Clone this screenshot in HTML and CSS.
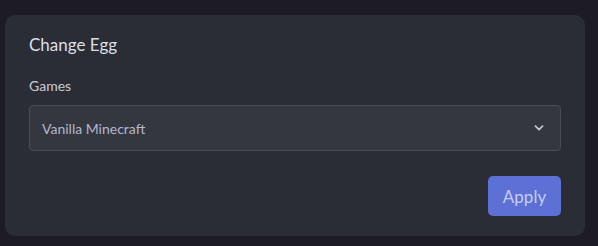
FILE: index.html
```html
<!DOCTYPE html>
<html lang="en">
<head>
    <meta charset="UTF-8">
    <meta name="viewport" content="width=device-width, initial-scale=1.0">
    <title>Change Egg</title>
    <link rel="stylesheet" href="styles.css">
</head>
<body>

    <!-- Change egg card -->
    <div class="card">
        <h2 class="card-title">Change Egg</h2>

        <div class="form-group">
            <label class="form-label">Games</label>
            <div class="select">
                <span class="select-value">Vanilla Minecraft</span>
                <svg class="select-arrow" width="10" height="6" viewBox="0 0 10 6">
                    <path d="M1.5 1.2 L5 4.6 L8.5 1.2" fill="none" stroke="#c3c6d2" stroke-width="1.8" stroke-linecap="round" stroke-linejoin="round"/>
                </svg>
            </div>
        </div>

        <div class="actions">
            <button class="apply-btn">Apply</button>
        </div>
    </div>

</body>
</html>
```

FILE: styles.css
```css
/* General styles */
body {
    margin: 0;
    padding: 15px 13px 11px 5px;
    background-color: #1c1b26;
    font-family: Lato, "Noto Sans", sans-serif;
    color: #d7d9e0;
}
.card {
    background-color: #2b2d36;
    border-radius: 10px;
    padding: 18px 24px 20px;
}
.card-title {
    margin: 0;
    font-size: 17px;
    font-weight: normal;
    line-height: 24px;
    color: #dcdee6;
}
.form-group {
    margin-top: 19px;
}
.form-label {
    display: block;
    font-size: 14px;
    line-height: 20px;
    color: #c9cbd3;
    margin-bottom: 9px;
}
.select {
    display: flex;
    align-items: center;
    justify-content: space-between;
    height: 44px;
    padding: 0 16px 0 12px;
    background-color: #343640;
    border: 1px solid #484a54;
    border-radius: 4px;
}
.select-value {
    font-size: 14px;
    color: #b3b7cf;
}
.select-arrow {
    display: block;
}
.actions {
    display: flex;
    justify-content: flex-end;
    margin-top: 25px;
}
.apply-btn {
    width: 73px;
    height: 40px;
    border: none;
    border-radius: 5px;
    background-color: #5c70d5;
    color: #c6cdf5;
    font-family: inherit;
    font-size: 17px;
    cursor: pointer;
}
```
